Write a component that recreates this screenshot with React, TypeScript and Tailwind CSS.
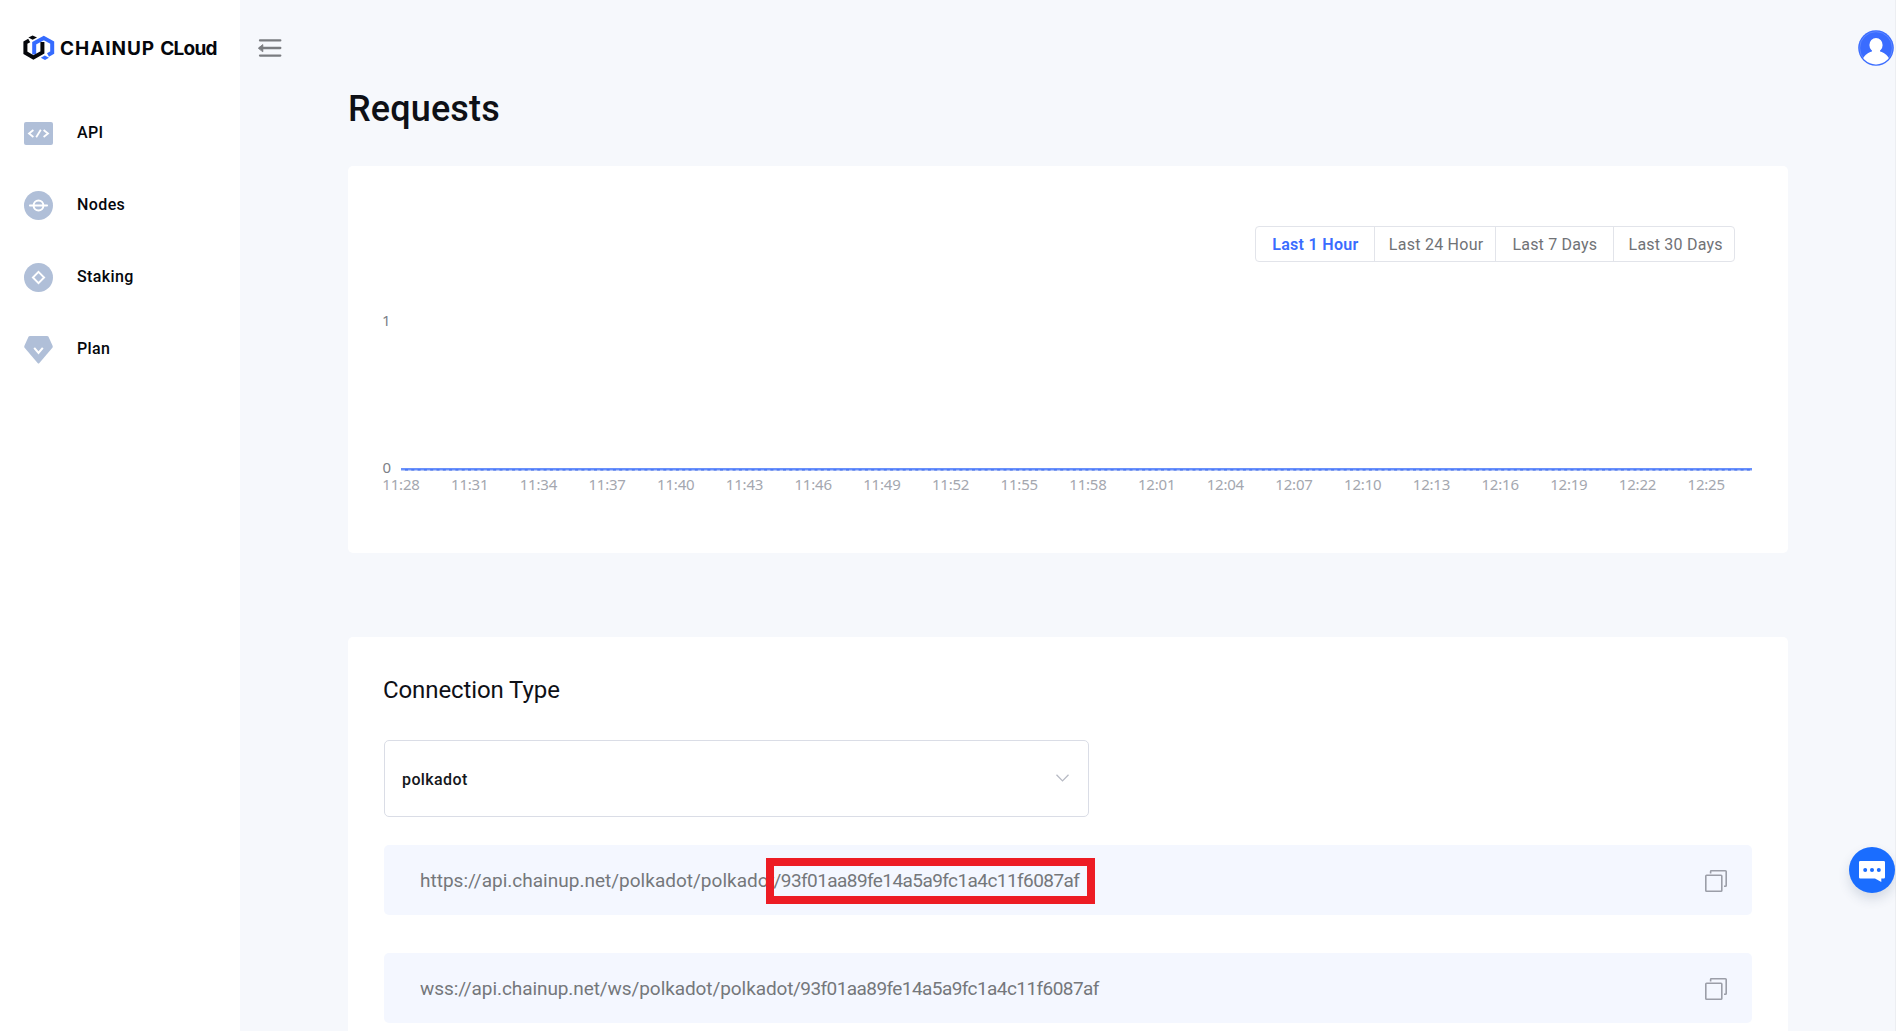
import type { ReactNode } from "react";

const ICON = "#b0bfd8";

function LogoMark() {
  return (
    <svg width="32" height="26" viewBox="0 0 32 26" className="shrink-0">
      <path d="M11.2 19.5V8.2L20.8 3L29.2 7.6V17.6L25 20" fill="none" stroke="#356bff" strokeWidth="4" />
      <path d="M21.8 20.6L26 22.8L22 25L17.8 22.8Z" fill="#356bff" />
      <path d="M6.2 5.4L2.4 7.6V17.8L10.4 22.4L19.4 17.4V7" fill="none" stroke="#05070c" strokeWidth="4" />
      <path d="M9.6 0.4L14 2.6L9.6 4.8L5.4 2.6Z" fill="#05070c" />
    </svg>
  );
}

function ApiIcon() {
  return (
    <svg width="29" height="29" viewBox="0 0 29 29">
      <rect y="3" width="29" height="23" rx="2" fill={ICON} />
      <path d="M9.4 11L5 14.5L9.4 18M19.6 11L24 14.5L19.6 18M16.8 10.8L12.2 18.2" fill="none" stroke="#fff" strokeWidth="1.8" />
    </svg>
  );
}

function NodesIcon() {
  return (
    <svg width="29" height="29" viewBox="0 0 29 29">
      <circle cx="14.5" cy="14.5" r="14.5" fill={ICON} />
      <circle cx="14.5" cy="14.5" r="4.9" fill="none" stroke="#fff" strokeWidth="2" />
      <path d="M5.9 14.5H23.1" stroke="#fff" strokeWidth="1.9" strokeLinecap="round" />
    </svg>
  );
}

function StakingIcon() {
  return (
    <svg width="29" height="29" viewBox="0 0 29 29">
      <circle cx="14.5" cy="14.5" r="14.5" fill={ICON} />
      <path d="M14.5 8.9L20.1 14.5L14.5 20.1L8.9 14.5Z" fill="none" stroke="#fff" strokeWidth="1.9" />
    </svg>
  );
}

function PlanIcon() {
  return (
    <svg width="29" height="29" viewBox="0 0 29 29">
      <path d="M6 1H23Q24 1 24.5 1.8L28.7 11Q29 12 28.4 12.8L15.4 28Q14.5 29 13.6 28L0.6 12.8Q0 12 0.3 11L4.5 1.8Q5 1 6 1Z" fill={ICON} />
      <path d="M10.2 12.8L14.5 18L18.8 12.8" fill="none" stroke="#fff" strokeWidth="2" />
    </svg>
  );
}

function NavItem({ icon, label }: { icon: ReactNode; label: string }) {
  return (
    <a className="flex h-[72px] items-center pl-6">
      {icon}
      <span className="-mt-px ml-6 text-[16px] font-medium tracking-[0.4px] text-[#05070c]">{label}</span>
    </a>
  );
}

function Sidebar() {
  return (
    <aside className="flex w-60 shrink-0 flex-col bg-white">
      <div className="flex h-[97px] items-start pt-[35px] pl-[23px]">
        <LogoMark />
        <div className="mt-px ml-[5px] flex h-[26px] items-center gap-[5px] font-[Inter,sans-serif] font-bold text-[#05070c]">
          <span className="text-[19px] tracking-[0.95px]">CHAINUP</span>
          <span className="text-[19px] tracking-[-0.7px]">CLoud</span>
        </div>
      </div>
      <NavItem icon={<ApiIcon />} label="API" />
      <NavItem icon={<NodesIcon />} label="Nodes" />
      <NavItem icon={<StakingIcon />} label="Staking" />
      <NavItem icon={<PlanIcon />} label="Plan" />
    </aside>
  );
}

function RangeTabs() {
  return (
    <div className="mr-[53px] flex h-9 w-[480px] self-end rounded-[4px] border border-[#e2e4ea] text-[16px] text-[#707276]">
      <div className="flex flex-1 items-center justify-center border-r border-[#e2e4ea] pt-0.5 pl-px font-semibold tracking-[0.3px] text-[#3a6cff]">Last 1 Hour</div>
      <div className="flex flex-1 items-center justify-center border-r border-[#e2e4ea] pt-0.5 pl-[3px] tracking-[0.25px]">Last 24 Hour</div>
      <div className="flex flex-1 items-center justify-center border-r border-[#e2e4ea] pt-0.5 pl-px tracking-[0.2px]">Last 7 Days</div>
      <div className="flex flex-1 items-center justify-center pt-0.5 pl-[3px] tracking-[0.2px]">Last 30 Days</div>
    </div>
  );
}

const TIMES = [
  "11:28", "11:31", "11:34", "11:37", "11:40", "11:43", "11:46", "11:49", "11:52", "11:55",
  "11:58", "12:01", "12:04", "12:07", "12:10", "12:13", "12:16", "12:19", "12:22", "12:25",
];

function RequestsChart() {
  return (
    <svg width="1440" height="253" viewBox="0 0 1440 253" className="font-['Noto_Sans',sans-serif] text-[15px] tracking-[-0.2px]">
      <text x="42.5" y="26" textAnchor="end" fill="#7c7f87">1</text>
      <text x="43" y="172.5" textAnchor="end" fill="#7c7f87">0</text>
      <rect x="53" y="168" width="1351" height="2" fill="#6a91fb" />
      <rect x="53" y="170" width="1351" height="1" fill="#b9cafb" />
      <path d="M57 169.5H1404" stroke="#4a78fa" strokeWidth="1" strokeDasharray="3 3.3" />
      <path d="M57 170.5H1404" stroke="#7f9dee" strokeWidth="1" strokeDasharray="3 3.3" />
      {TIMES.map((t, i) => (
        <text key={t} x={53 + (i * 3 * 1351) / 59} y="190" textAnchor="middle" fill="#a4a7af">
          {t}
        </text>
      ))}
    </svg>
  );
}

function CopyIcon() {
  return (
    <svg width="22" height="22" viewBox="0 0 22 22" className="mt-0.5" fill="none" stroke="#9b9ea8" strokeWidth="1.6">
      <rect x="0.8" y="5.3" width="16" height="15.9" rx="0.8" />
      <path d="M5.6 3.6V1.4Q5.6 0.8 6.2 0.8H20.4Q21.2 0.8 21.2 1.6V15.4Q21.2 16.2 20.4 16.2H19" />
    </svg>
  );
}

function Endpoint({ base, apiKey, marked }: { base: string; apiKey: string; marked?: boolean }) {
  return (
    <div className="flex h-[70px] items-center justify-between rounded-[5px] bg-[#f4f7ff] pr-[25px] pl-9 text-[19px] text-[#75777b]">
      <div className="mt-0.5 flex">
        {marked ? <span className="w-[353.5px] tracking-[0.01px]">{base}</span> : <span className="w-[373px] tracking-[-0.08px]">{base}</span>}
        <span className="relative tracking-[-0.57px]">
          {apiKey}
          {marked && <span className="absolute -top-[9px] -left-[7.5px] h-[46px] w-[329px] border-8 border-[#ed1c24]" />}
        </span>
      </div>
      <CopyIcon />
    </div>
  );
}

function ConnectionCard() {
  return (
    <section className="mt-[84px] h-[420px] shrink-0 rounded-[5px] bg-white px-9 pt-[37px]">
      <h2 className="-ml-px text-[24px] leading-8 tracking-[-0.1px] text-[#0e1016]">Connection Type</h2>
      <div className="mt-[34px] flex h-[77px] w-[705px] items-center justify-between rounded-[5px] border border-[#dadde6] pr-[19px] pl-[17px]">
        <span className="mt-[2px] text-[16px] font-medium tracking-[0.4px] text-[#15171c]">polkadot</span>
        <svg width="13" height="8" viewBox="0 0 13 8" className="-mt-0.5">
          <path d="M0.5 0.7L6.5 6.9L12.5 0.7" fill="none" stroke="#b7bac4" strokeWidth="1.3" />
        </svg>
      </div>
      <div className="mt-7 flex flex-col gap-[38px]">
        <Endpoint base="https://api.chainup.net/polkadot/polkadot" apiKey="/93f01aa89fe14a5a9fc1a4c11f6087af" marked />
        <Endpoint base="wss://api.chainup.net/ws/polkadot/polkadot" apiKey="/93f01aa89fe14a5a9fc1a4c11f6087af" />
      </div>
    </section>
  );
}

function Header() {
  return (
    <header className="flex h-20 shrink-0 items-start justify-between pr-0.5 pl-[18px]">
      <svg width="24" height="20" viewBox="0 0 24 20" className="mt-[38px]" fill="none" stroke="#7a7c80" strokeWidth="2.3" strokeLinecap="round">
        <path d="M2 2.4H22.3M2 10H22.3M2 17.6H22.3" />
        <path d="M0.6 10L4.8 6.6V13.4Z" fill="#7a7c80" stroke="#7a7c80" strokeWidth="0.9" strokeLinejoin="round" />
      </svg>
      <svg width="36" height="36" viewBox="0 0 36 36" className="mt-[30px]">
        <clipPath id="avatar">
          <circle cx="18" cy="18" r="16.4" />
        </clipPath>
        <circle cx="18" cy="18" r="17.8" fill="#3a6cff" />
        <circle cx="18" cy="18" r="16.3" fill="none" stroke="#7fa0ff" strokeWidth="0.5" />
        <g clipPath="url(#avatar)" fill="#fff">
          <ellipse cx="18" cy="15" rx="6.6" ry="7" />
          <rect x="14" y="18" width="8" height="5" />
          <path d="M4 30C7 24 12 21 18 21S29 24 32 30L28 35H8Z" />
        </g>
      </svg>
    </header>
  );
}

export default function App() {
  return (
    <div className="relative flex h-[1031px] w-[1896px] overflow-hidden bg-[#f6f8fc] font-[Roboto,sans-serif]">
      <Sidebar />
      <main className="flex min-w-0 flex-1 flex-col">
        <Header />
        <div className="ml-[108px] flex w-[1440px] flex-col">
          <h1 className="mt-[9px] text-[36px] leading-10 font-medium tracking-[0.15px] text-[#0e1016]">Requests</h1>
          <section className="mt-[37px] flex h-[387px] shrink-0 flex-col rounded-[5px] bg-white pt-[60px]">
            <RangeTabs />
            <div className="mt-[38px]">
              <RequestsChart />
            </div>
          </section>
          <ConnectionCard />
        </div>
      </main>
      <div className="absolute top-0 right-0 h-full w-px bg-[#eceef2]" />
      <button className="absolute top-[847px] left-[1849px] flex size-[46px] items-center justify-center rounded-full bg-[#1a6dff] shadow-[0_6px_12px_rgba(40,60,100,0.16)]">
        <svg width="26" height="21" viewBox="0 0 26 21" className="mt-0.5">
          <path d="M1.2 0H24.8Q26 0 26 1.2V16.3Q26 17.5 24.8 17.5H22.3V21L16 17.5H1.2Q0 17.5 0 16.3V1.2Q0 0 1.2 0Z" fill="#fff" />
          <g fill="#1a6dff">
            <circle cx="6.2" cy="9" r="2" />
            <circle cx="13" cy="9" r="2" />
            <circle cx="19.8" cy="9" r="2" />
          </g>
        </svg>
      </button>
    </div>
  );
}
